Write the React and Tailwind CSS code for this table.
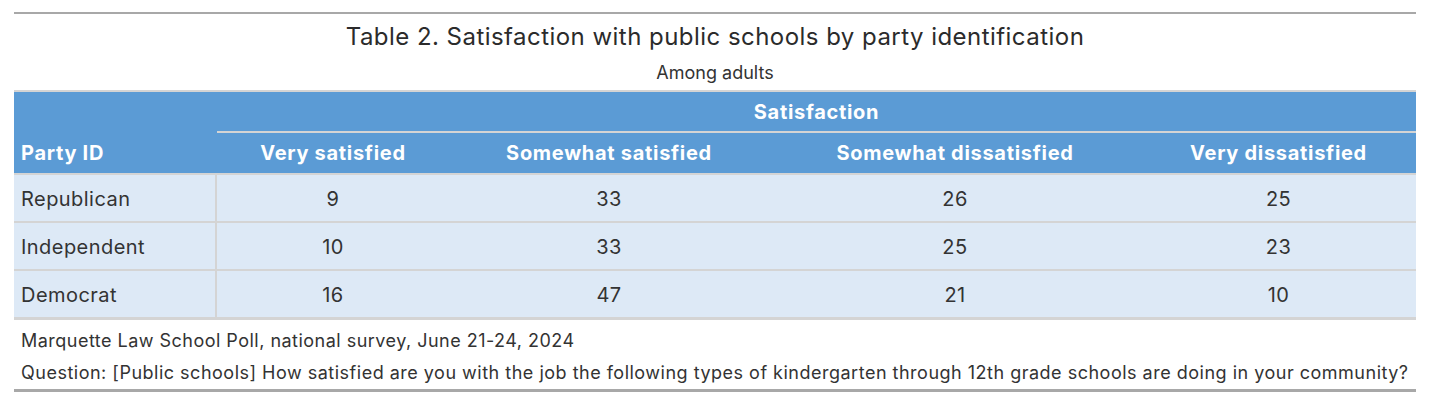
export default function App() {
  const rows = [
    ["Republican", "9", "33", "26", "25"],
    ["Independent", "10", "33", "25", "23"],
    ["Democrat", "16", "47", "21", "10"],
  ];
  return (
    <div className="w-[1430px] h-[404px] bg-white px-[14px] pt-[12px] text-[#333333]" style={{ fontFamily: "Inter, 'Noto Sans', sans-serif" }}>
      <div className="border-t-2 border-[#a8a8a8]">
        <div className="text-center text-[24px] leading-[32px] tracking-[0.46px] pt-[7px] text-[#2b2b2b]">
          Table 2. Satisfaction with public schools by party identification
        </div>
        <div className="text-center text-[18px] leading-[24px] mt-[8px] text-[#333333]">Among adults</div>
        <table className="mt-[5px] w-[1402px] table-fixed border-separate border-spacing-0 border-t-2 border-[#d4d4d4]">
          <colgroup>
            <col className="w-[203px]" />
            <col className="w-[232px]" />
            <col className="w-[320px]" />
            <col className="w-[372px]" />
            <col className="w-[275px]" />
          </colgroup>
          <thead>
            <tr className="bg-[#5b9bd5] text-white">
              <th className="p-0 leading-[39px]"></th>
              <th colSpan={4} className="pt-[2px] pb-0 px-0 leading-[37px] text-[20px] font-bold tracking-[0.7px] text-center border-b-2 border-[#d4d4d4]">
                Satisfaction
              </th>
            </tr>
            <tr className="bg-[#5b9bd5] text-white">
              <th className="pt-[1px] pb-0 pl-[7px] leading-[39px] text-left text-[20px] font-bold tracking-[0.7px] border-b-2 border-[#d4d4d4]">Party ID</th>
              <th className="pt-[1px] pb-0 px-0 leading-[39px] text-center text-[20px] font-bold tracking-[0.7px] border-b-2 border-[#d4d4d4]">Very satisfied</th>
              <th className="pt-[1px] pb-0 px-0 leading-[39px] text-center text-[20px] font-bold tracking-[0.7px] border-b-2 border-[#d4d4d4]">Somewhat satisfied</th>
              <th className="pt-[1px] pb-0 px-0 leading-[39px] text-center text-[20px] font-bold tracking-[0.7px] border-b-2 border-[#d4d4d4]">Somewhat dissatisfied</th>
              <th className="pt-[1px] pb-0 px-0 leading-[39px] text-center text-[20px] font-bold tracking-[0.7px] border-b-2 border-[#d4d4d4]">Very dissatisfied</th>
            </tr>
          </thead>
          <tbody>
            {rows.map((r, i) => {
              const last = i === rows.length - 1;
              return (
                <tr key={i} className="bg-[#dde9f6]">
                  <td className={`pt-[2px] pb-0 pl-[7px] leading-[44px] text-[20px] tracking-[0.45px] text-left border-r-2 border-[#d4d4d4] ${last ? "border-b-[3px]" : "border-b-2"}`}>{r[0]}</td>
                  {r.slice(1).map((v, j) => (
                    <td key={j} className={`pt-[2px] pb-0 px-0 leading-[44px] text-[20px] tracking-[0.45px] text-center border-[#d4d4d4] ${last ? "border-b-[3px]" : "border-b-2"}`}>{v}</td>
                  ))}
                </tr>
              );
            })}
          </tbody>
        </table>
        <div className="pl-[7px] text-[18px] leading-[24px] tracking-[0.48px] pt-[9px] text-[#333333]">
          Marquette Law School Poll, national survey, June 21-24, 2024
        </div>
        <div className="pl-[7px] text-[18px] leading-[24px] tracking-[0.5px] pt-[8px] pb-[4px] text-[#333333] border-b-[3px] border-[#a8a8a8]">
          Question: [Public schools] How satisfied are you with the job the following types of kindergarten through 12th grade schools are doing in your community?
        </div>
      </div>
    </div>
  );
}
